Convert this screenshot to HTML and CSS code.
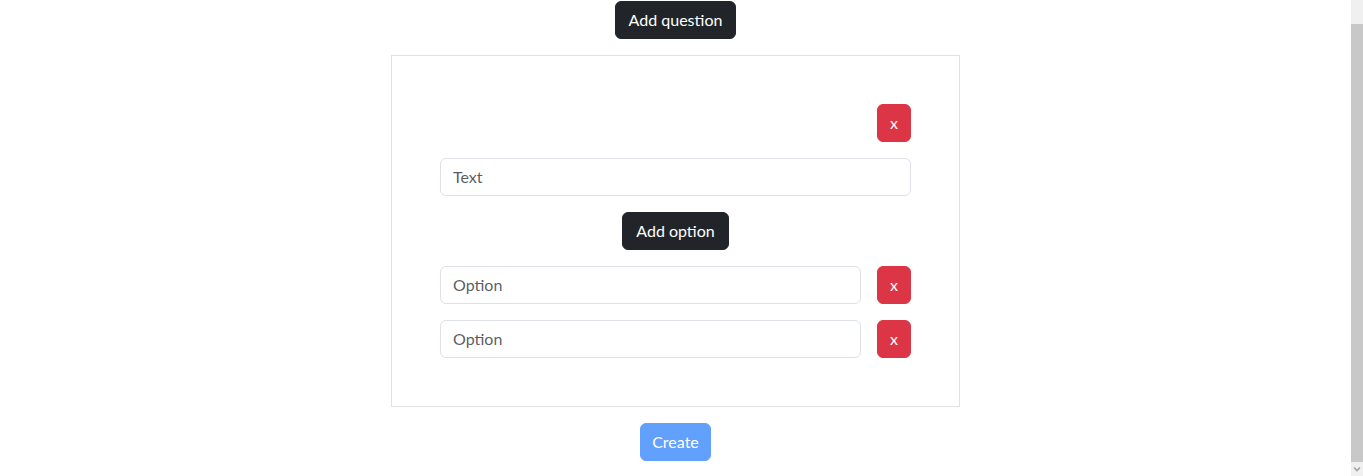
FILE: index.html
```html
<!DOCTYPE html>
<html lang="en">
<head>
<meta charset="utf-8">
<title>Create poll</title>
<link rel="stylesheet" href="styles.css">
</head>
<body>
<main class="page">
  <button class="btn btn-dark" type="button">Add question</button>
  <section class="card">
    <div class="row-end">
      <button class="btn btn-danger" type="button">x</button>
    </div>
    <input class="form-control" type="text" placeholder="Text">
    <button class="btn btn-dark center" type="button">Add option</button>
    <div class="option-row">
      <input class="form-control" type="text" placeholder="Option">
      <button class="btn btn-danger" type="button">x</button>
    </div>
    <div class="option-row">
      <input class="form-control" type="text" placeholder="Option">
      <button class="btn btn-danger" type="button">x</button>
    </div>
  </section>
  <button class="btn btn-primary" type="button" disabled>Create</button>
</main>
<div class="scrollbar">
  <div class="scroll-gap"></div>
  <div class="scroll-thumb"></div>
  <div class="scroll-arrow">
    <svg width="12" height="14" viewBox="0 0 12 14"><path d="M3 5.5 L6 8.5 L9 5.5" fill="none" stroke="#a3a3a3" stroke-width="1.6"/></svg>
  </div>
</div>
</body>
</html>
```
FILE: styles.css
```css
* { box-sizing: border-box; }
html, body { margin: 0; height: 100%; }
body {
  display: flex;
  font-family: Lato, "Noto Sans", sans-serif;
  font-size: 16px;
  line-height: 24px;
  color: #212529;
  background: #fff;
  overflow: hidden;
}
.page {
  flex: 1;
  display: flex;
  flex-direction: column;
  align-items: center;
  gap: 16px;
  padding-top: 1px;
}
.btn {
  font-family: inherit;
  font-size: 16px;
  line-height: 24px;
  padding: 6px 12px;
  border: 1px solid transparent;
  border-radius: 6px;
  cursor: pointer;
}
.btn-dark { background: #212529; border-color: #212529; color: #fff; padding: 6px 13px; }
.btn-danger { background: #dc3545; border-color: #dc3545; color: #fff; width: 34px; padding: 6px 0; text-align: center; }
.btn-primary { background: #0d6efd; border-color: #0d6efd; color: #fff; padding: 6px 11px; }
.btn-primary:disabled { opacity: 0.65; }
.card {
  width: 569px;
  border: 1px solid #dee2e6;
  padding: 48px;
  display: flex;
  flex-direction: column;
  gap: 16px;
}
.row-end { display: flex; justify-content: flex-end; }
.center { align-self: center; }
.form-control {
  width: 100%;
  height: 38px;
  font-family: inherit;
  font-size: 16px;
  line-height: 24px;
  padding: 5px 12px 7px;
  border: 1px solid #dee2e6;
  border-radius: 6px;
  color: #212529;
  background: #fff;
}
.form-control::placeholder { color: rgba(33, 37, 41, 0.75); }
.option-row { display: flex; gap: 16px; }
.option-row .form-control { flex: 1; width: auto; }
.scrollbar {
  width: 12px;
  background: #f0f0f0;
  display: flex;
  flex-direction: column;
}
.scroll-gap { height: 24px; }
.scroll-thumb { flex: 1; background: #c8c8c8; }
.scroll-arrow { height: 14px; display: flex; }
```
